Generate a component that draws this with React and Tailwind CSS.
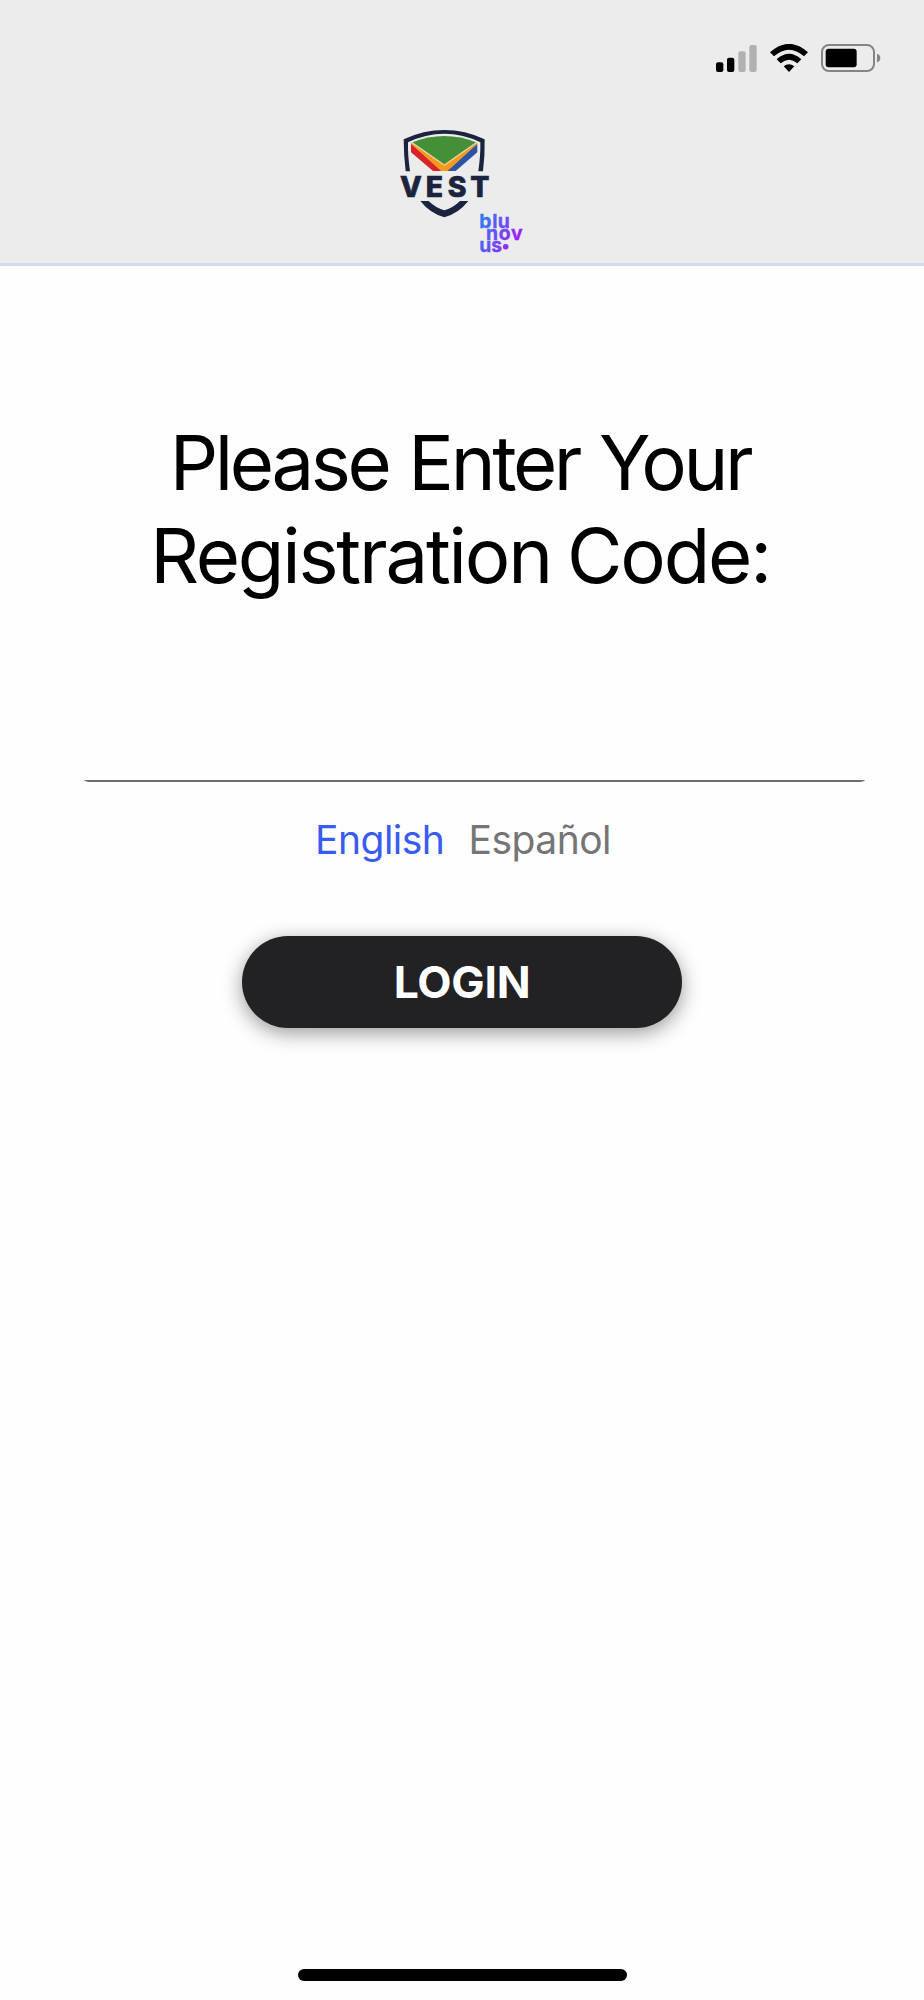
import { useState } from 'react'

const languages = ['English', 'Español']

function SignalIcon() {
    return (
        <svg className="w-[41px] h-[27px]" viewBox="0 0 123 81">
            <rect x="0" y="52" width="22" height="29" rx="6" />
            <rect x="33" y="38" width="22" height="43" rx="6" />
            <rect x="67" y="19" width="22" height="62" rx="6" fill="#b1b1b1" />
            <rect x="100" y="0" width="22" height="81" rx="6" fill="#b1b1b1" />
        </svg>
    )
}

function WifiIcon() {
    return (
        <svg className="w-[38px] h-[28px]" viewBox="0 0 114 84">
            <path d="M0 25 Q57 -26 114 25 L102 37 Q57 -2 12 37 Z" />
            <path d="M20 46 Q57 13 94 46 L82 58 Q57 37 32 58 Z" />
            <path d="M41 67 Q57 54 73 67 L57 84 Z" />
        </svg>
    )
}

function BatteryIcon() {
    return (
        <svg className="w-[60px] h-[28px]" viewBox="0 0 180 84">
            <rect x="3" y="3" width="156" height="78" rx="21" fill="none" stroke="#858585" strokeWidth="6" />
            <rect x="14" y="14" width="93" height="56" rx="9" />
            <path d="M168 29 Q178 32 178 42 Q178 52 168 55 Z" fill="#858585" />
        </svg>
    )
}

function Logo() {
    return (
        <svg className="w-[160px] h-[146px]" viewBox="0 0 480 438">
            <defs>
                <linearGradient id="blunovus" gradientUnits="userSpaceOnUse" x1="300" y1="310" x2="425" y2="375">
                    <stop offset="0" stopColor="#2f7bf5" />
                    <stop offset="0.5" stopColor="#6a4df5" />
                    <stop offset="1" stopColor="#a916f0" />
                </linearGradient>
            </defs>

            {/* shield */}
            <path d="M77 169 Q71 120 71 73 Q130 45 193 45 Q256 45 314 73 Q315 120 309 169 L295 169 Q302 120 301 82 Q250 56 193 56 Q136 56 84 82 Q83 120 90 169 Z" fill="#1c233f" />
            <path d="M121 258 L146 258 Q166 278 193 286 Q220 278 240 258 L265 258 Q236 295 193 307 Q150 295 121 258 Z" fill="#1c233f" />

            {/* field */}
            <path d="M93 86 L188 168 L159 168 L93 112 Z" fill="#d92229" />
            <path d="M292 86 L198 168 L227 168 L292 112 Z" fill="#2d53a5" />
            <path d="M93 82 L193 148 L292 82 L292 86 L203 168 L183 168 L93 86 Z" fill="#f39a1e" />
            <path d="M94 82 L193 151 L291 82" fill="none" stroke="#f5dfad" strokeWidth="3" />
            <path d="M97 82 Q145 63 193 63 Q241 63 288 82 L193 148 Z" fill="#468f39" />

            <text x="60 137 203 271" y="245" fontSize="85" fontFamily="Inter" fontWeight="800" fill="#1c233f" stroke="#1c233f" strokeWidth="2">VEST</text>

            <g fill="url(#blunovus)" stroke="url(#blunovus)" strokeWidth="1" fontSize="58" fontFamily="Inter" fontWeight="700">
                <text x="298 337 353" y="340">blu</text>
                <text x="318 356 393" y="375">nov</text>
                <text x="298 334" y="411">us</text>
                <circle cx="377" cy="395" r="8" />
            </g>
        </svg>
    )
}

export default function App() {
    const [language, setLanguage] = useState('English')

    return (
        <div className="w-full min-h-[2000px] flex flex-col bg-[#fefefe] font-[Inter,sans-serif] text-black">
            <header className="h-[266px] flex flex-col bg-[#ececec] border-b-3 border-[#d3dbee]">
                <div className="flex justify-end items-center gap-[13px] pt-[44px] pr-[43px]">
                    <SignalIcon />
                    <WifiIcon />
                    <BatteryIcon />
                </div>
                <div className="flex justify-center mt-[43px] pr-1">
                    <Logo />
                </div>
            </header>

            <main className="flex flex-col items-center pt-[150px]">
                <h1 className="mr-[4px] text-center text-[76px] leading-[93px]">
                    <span className="tracking-[-3.4px] [word-spacing:2px]">Please Enter Your</span>
                    <br />
                    <span className="tracking-[-2.2px] [word-spacing:-3px]">Registration Code:</span>
                </h1>

                <input
                    type="text"
                    aria-label="Registration code"
                    className="w-[781px] h-[80px] mt-[100px] ml-[24px] px-4 text-4xl bg-transparent outline-none border-b-2 border-[#6b6e6b] [border-radius:0_0_8px_8px/0_0_2px_2px]"
                />

                <div className="flex gap-6 mt-[34px] ml-[2px] text-[39px] leading-[48px] tracking-[-0.5px]">
                    {languages.map((name) => (
                        <button
                            key={name}
                            onClick={() => setLanguage(name)}
                            className={name === language ? 'text-[#3a5bf0]' : 'text-[#757575]'}
                        >
                            {name}
                        </button>
                    ))}
                </div>

                <button className="w-[440px] h-[92px] mt-[72px] rounded-full bg-[#222224] text-white text-[44.5px] font-bold tracking-[-0.3px] shadow-[0_5px_20px_rgba(0,0,0,0.4)]">
                    LOGIN
                </button>
            </main>

            <div className="w-[329px] h-3 mt-auto mb-[19px] mx-auto rounded-full bg-black" />
        </div>
    )
}
